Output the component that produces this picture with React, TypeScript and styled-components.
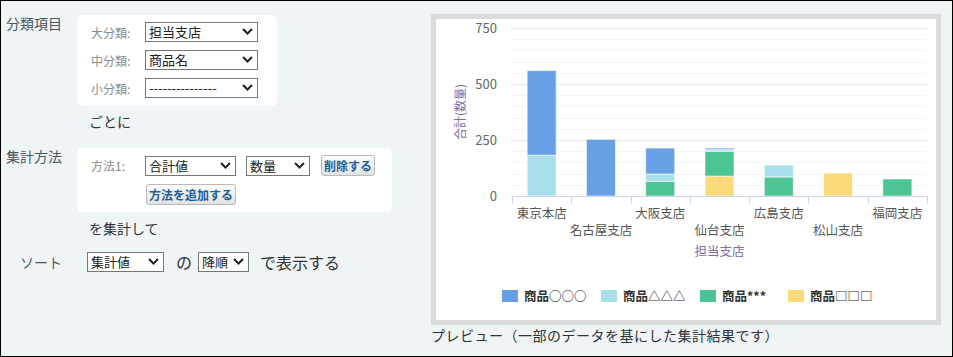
import styled, { createGlobalStyle } from "styled-components";

const GlobalStyle = createGlobalStyle`
  body {
    margin: 0;
    font-family: "Noto Sans CJK JP", "Noto Sans", sans-serif;
  }
`

const Frame = styled.div`
  width: 953px;
  height: 357px;
  box-sizing: border-box;
  border: 1px solid #000;
  background: #eff4f7;
  display: flex;
  color: #333;
`
const Settings = styled.div`
  width: 430px;
  box-sizing: border-box;
  padding: 14px 0 0 5px;
  display: flex;
  flex-direction: column;
`
const Section = styled.div<{ $top?: number }>`
  display: flex;
  margin-top: ${p => p.$top ?? 0}px;
`
const SectionLabel = styled.div`
  width: 71px;
  font-size: 14px;
  line-height: 20px;
  margin-top: -2px;
  color: #4b5661;
`
const SectionBody = styled.div`
  display: flex;
  flex-direction: column;
`
const Card = styled.div<{ $w: number; $bottom: number }>`
  width: ${p => p.$w}px;
  box-sizing: border-box;
  background: #fff;
  border-radius: 6px;
  padding: 7px 0 ${p => p.$bottom}px 14px;
  display: flex;
  flex-direction: column;
  gap: 8px;
`
const Row = styled.div<{ $h?: number }>`
  display: flex;
  align-items: center;
  height: ${p => p.$h ?? 20}px;
`
const FieldLabel = styled.span`
  width: 54px;
  font-size: 12px;
  color: #8a8a8a;
`
const Note = styled.div<{ $top: number }>`
  font-size: 14px;
  line-height: 20px;
  padding-left: 12px;
  margin-top: ${p => p.$top}px;
`
const SelectWrap = styled.span<{ $w: number; $gap?: number }>`
  position: relative;
  display: inline-flex;
  width: ${p => p.$w}px;
  height: 20px;
  margin-right: ${p => p.$gap ?? 0}px;
  flex-shrink: 0;
`
const NativeSelect = styled.select`
  appearance: none;
  width: 100%;
  height: 100%;
  box-sizing: border-box;
  border: 1px solid #767676;
  border-radius: 0;
  background: #fff;
  font-family: "Noto Sans CJK JP", sans-serif;
  font-size: 13px;
  line-height: 18px;
  color: #222;
  padding: 0 0 0 3px;
  outline: none;
`
const Chevron = styled.svg`
  position: absolute;
  right: 5px;
  top: 6px;
  width: 11px;
  height: 7px;
  pointer-events: none;
`
const Btn = styled.button`
  height: 21px;
  padding: 0 2px;
  border: 1px solid #b9b9b9;
  border-radius: 3px;
  background: linear-gradient(#fdfdfd, #e2e2e2);
  font-family: "Noto Sans CJK JP", sans-serif;
  font-size: 12px;
  font-weight: bold;
  line-height: 19px;
  color: #1d5d9b;
`
const Indent = styled.span`
  width: 55px;
  flex-shrink: 0;
`
const SortRow = styled.div`
  display: flex;
  align-items: center;
  height: 20px;
  margin-top: 14px;
`
const SortLabel = styled.span`
  width: 81px;
  box-sizing: border-box;
  padding-left: 14px;
  font-size: 14px;
  color: #4b5661;
`
const SortText = styled.span<{ $right: number }>`
  font-size: 16px;
  margin-right: ${p => p.$right}px;
  color: #333;
`
const Preview = styled.div`
  margin-top: 13px;
  display: flex;
  flex-direction: column;
`
const ChartPanel = styled.div`
  width: 510px;
  height: 311px;
  box-sizing: border-box;
  border: 5px solid #dcdcdc;
  background: #fff;
`
const Caption = styled.div`
  font-size: 14px;
  line-height: 20px;
  letter-spacing: 0.5px;
  color: #333;
`

function Select({ w, value, gap }: { w: number; value: string; gap?: number }) {
  return (
    <SelectWrap $w={w} $gap={gap}>
      <NativeSelect defaultValue={value}>
        <option>{value}</option>
      </NativeSelect>
      <Chevron viewBox="0 0 11 7">
        <path d="M1 1 L5.5 5.5 L10 1" fill="none" stroke="#222" strokeWidth="2" />
      </Chevron>
    </SelectWrap>
  );
}

const COLORS = { o: "#68a1e3", t: "#a9dfea", s: "#4cc493", q: "#fbda7a" };

// stack bottom -> top: □, ***, △△△, ○○○
const DATA: { name: string; q: number; s: number; t: number; o: number }[] = [
  { name: "東京本店", q: 0, s: 0, t: 182, o: 378 },
  { name: "名古屋支店", q: 0, s: 0, t: 0, o: 253 },
  { name: "大阪支店", q: 0, s: 66, t: 32, o: 116 },
  { name: "仙台支店", q: 89, s: 111, t: 7, o: 7 },
  { name: "広島支店", q: 0, s: 85, t: 53, o: 0 },
  { name: "松山支店", q: 103, s: 0, t: 0, o: 0 },
  { name: "福岡支店", q: 0, s: 76, t: 0, o: 0 },
];

const LEGEND = [
  { label: "商品○○○", color: COLORS.o, x: 66 },
  { label: "商品△△△", color: COLORS.t, x: 165 },
  { label: "商品***", color: COLORS.s, x: 264 },
  { label: "商品□□□", color: COLORS.q, x: 352 },
];

function Chart() {
  const y0 = 177;
  const k = 168 / 750;
  const left = 76;
  const right = 491;
  const cw = (right - left) / 7;
  const bw = 29;
  const grid = [];
  for (let v = 50; v <= 750; v += 50) {
    const y = Math.round(y0 - v * k) + 0.5;
    grid.push(
      <line key={v} x1={left} x2={right} y1={y} y2={y} stroke={v % 250 === 0 ? "#e6e9ef" : "#f4f5f7"} />
    );
  }
  const font = '"Noto Sans CJK JP", sans-serif';
  return (
    <svg width="500" height="301" viewBox="0 0 500 301" fontFamily={font}>
      {grid}
      {[0, 250, 500, 750].map(v => (
        <text key={v} x="61" y={y0 - v * k + 4.5} fontSize="13" fill="#666" textAnchor="end">{v}</text>
      ))}
      <text x="23" y="93" fontSize="12" fill="#7e6ca8" textAnchor="middle" dominantBaseline="central" transform="rotate(-90 23 93)">合計(数量)</text>
      {DATA.map((d, i) => {
        const cx = left + (i + 0.5) * cw;
        let acc = 0;
        const segs = (["q", "s", "t", "o"] as const).map(key => {
          const v = d[key];
          if (!v) return null;
          const yTop = y0 - (acc + v) * k;
          const h = v * k;
          acc += v;
          return (
            <rect key={key} x={cx - bw / 2} y={yTop} width={bw} height={h} fill={COLORS[key]} stroke="rgba(255,255,255,0.6)" strokeWidth="1" />
          );
        });
        return (
          <g key={d.name}>
            {segs}
            <text x={cx} y={i % 2 === 0 ? 199 : 216} fontSize="12.5" fill="#555" textAnchor="middle">{d.name}</text>
          </g>
        );
      })}
      <line x1={left} x2={right} y1={y0 + 0.5} y2={y0 + 0.5} stroke="#ccd6eb" />
      {Array.from({ length: 8 }, (_, i) => {
        const x = Math.round(left + i * cw) + 0.5;
        return <line key={i} x1={x} x2={x} y1={y0} y2={y0 + 8} stroke="#ccd6eb" />;
      })}
      <text x={(left + right) / 2} y="237" fontSize="12.5" fill="#7e6ca8" textAnchor="middle">担当支店</text>
      {LEGEND.map(l => (
        <g key={l.label}>
          <rect x={l.x} y="271" width="16" height="12" fill={l.color} />
          <text x={l.x + 22} y="282" fontSize="12.5" fontWeight="bold" fill="#333">{l.label}</text>
        </g>
      ))}
    </svg>
  );
}

export default function App() {
  return (
    <>
      <GlobalStyle />
      <Frame>
        <Settings>
          <Section>
            <SectionLabel>分類項目</SectionLabel>
            <SectionBody>
              <Card $w={200} $bottom={8}>
                <Row>
                  <FieldLabel>大分類:</FieldLabel>
                  <Select w={113} value="担当支店" />
                </Row>
                <Row>
                  <FieldLabel>中分類:</FieldLabel>
                  <Select w={113} value="商品名" />
                </Row>
                <Row>
                  <FieldLabel>小分類:</FieldLabel>
                  <Select w={113} value="---------------" />
                </Row>
              </Card>
              <Note $top={5}>ごとに</Note>
            </SectionBody>
          </Section>
          <Section $top={17}>
            <SectionLabel>集計方法</SectionLabel>
            <SectionBody>
              <Card $w={315} $bottom={7}>
                <Row $h={21}>
                  <FieldLabel>方法1:</FieldLabel>
                  <Select w={91} value="合計値" gap={10} />
                  <Select w={64} value="数量" gap={11} />
                  <Btn>削除する</Btn>
                </Row>
                <Row $h={21}>
                  <Indent />
                  <Btn>方法を追加する</Btn>
                </Row>
              </Card>
              <Note $top={6}>を集計して</Note>
            </SectionBody>
          </Section>
          <SortRow>
            <SortLabel>ソート</SortLabel>
            <Select w={77} value="集計値" gap={12} />
            <SortText $right={6}>の</SortText>
            <Select w={51} value="降順" gap={11} />
            <SortText $right={0}>で表示する</SortText>
          </SortRow>
        </Settings>
        <Preview>
          <ChartPanel>
            <Chart />
          </ChartPanel>
          <Caption>プレビュー（一部のデータを基にした集計結果です）</Caption>
        </Preview>
      </Frame>
    </>
  );
}
